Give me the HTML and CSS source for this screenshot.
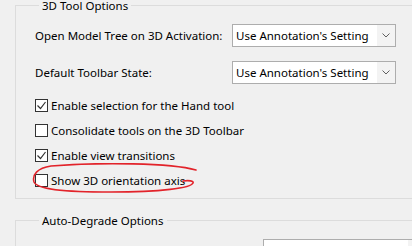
FILE: index.html
```html
<!DOCTYPE html>
<html lang="en">
<head>
    <meta charset="UTF-8">
    <meta name="viewport" content="width=device-width, initial-scale=1.0">
    <title>3D &amp; Multimedia Preferences</title>
    <link rel="stylesheet" href="styles.css">
</head>
<body>

    <!-- 3D Tool Options -->
    <fieldset class="group">
        <legend>3D Tool Options</legend>

        <div class="field">
            <label>Open Model Tree on 3D Activation:</label>
            <div class="combo">
                <span class="combo-value">Use Annotation's Setting</span>
                <span class="combo-arrow"><svg width="8" height="5" viewBox="0 0 8 5"><polyline points="0.5,0.5 4,4 7.5,0.5" /></svg></span>
            </div>
        </div>

        <div class="field">
            <label>Default Toolbar State:</label>
            <div class="combo">
                <span class="combo-value">Use Annotation's Setting</span>
                <span class="combo-arrow"><svg width="8" height="5" viewBox="0 0 8 5"><polyline points="0.5,0.5 4,4 7.5,0.5" /></svg></span>
            </div>
        </div>

        <div class="checks">
            <div class="check">
                <span class="box checked"><svg width="11" height="11" viewBox="0 0 11 11"><polyline points="1.5,5.5 4.5,8.5 9.5,2" /></svg></span>
                Enable selection for the Hand tool
            </div>
            <div class="check">
                <span class="box"></span>
                Consolidate tools on the 3D Toolbar
            </div>
            <div class="check">
                <span class="box checked"><svg width="11" height="11" viewBox="0 0 11 11"><polyline points="1.5,5.5 4.5,8.5 9.5,2" /></svg></span>
                Enable view transitions
            </div>
            <div class="check marked">
                <span class="box"></span>
                Show 3D orientation axis
                <!-- red hand-drawn circle -->
                <svg class="scribble" width="172" height="32" viewBox="0 0 172 32">
                    <path d="M166 7 C141 0, 71 -1, 21 3 C7 5, 2 12, 4 19 C7 26, 31 29, 81 29 C131 29, 161 25, 163 20 C164 18, 159 17, 153 18" />
                </svg>
            </div>
        </div>
    </fieldset>

    <!-- Auto-Degrade Options -->
    <fieldset class="group second">
        <legend>Auto-Degrade Options</legend>

        <div class="field">
            <label class="wide">Optimization Scheme for Low Frame Rate:</label>
            <div class="combo">
                <span class="combo-value">Bounding Box</span>
                <span class="combo-arrow"><svg width="8" height="5" viewBox="0 0 8 5"><polyline points="0.5,0.5 4,4 7.5,0.5" /></svg></span>
            </div>
        </div>
    </fieldset>

</body>
</html>
```

FILE: styles.css
```css
* {
    box-sizing: border-box;
}

body {
    margin: 0;
    background-color: #f0f0f0;
    font-family: "Noto Sans", "Liberation Sans", sans-serif;
    font-size: 11.5px;
    color: #000;
    overflow: hidden;
}

.group {
    margin: -1px -40px 0 15px;
    padding: 13px 0 5px 19px;
    border: 1px solid #dcdcdc;
    min-width: 0;
}

.group legend {
    margin-left: 4px;
    padding: 2px 3px 0;
    line-height: 10px;
}

.second {
    margin-top: 15px;
}

.field {
    display: flex;
    align-items: center;
    height: 23px;
    margin-bottom: 14px;
}

.field label {
    width: 197px;
    flex-shrink: 0;
    white-space: nowrap;
}

.field label.wide {
    width: 228px;
}

.combo {
    display: flex;
    width: 164px;
    height: 23px;
    border: 1px solid #adadad;
    background: #fff;
}

.combo-value {
    flex: 1;
    padding-left: 3px;
    line-height: 21px;
    white-space: nowrap;
    overflow: hidden;
}

.combo-arrow {
    width: 18px;
    display: flex;
    align-items: center;
    justify-content: center;
    background: #f3f3f3;
}

.combo-arrow polyline {
    fill: none;
    stroke: #606060;
    stroke-width: 1;
}

.checks {
    margin-top: -5px;
}

.check {
    display: flex;
    align-items: center;
    height: 25px;
}

.box {
    width: 13px;
    height: 13px;
    border: 1px solid #333;
    background: #fff;
    margin-right: 3px;
    display: flex;
    align-items: center;
    justify-content: center;
}

.box polyline {
    fill: none;
    stroke: #333;
    stroke-width: 1.2;
}

.marked {
    position: relative;
}

.scribble {
    position: absolute;
    left: -5px;
    top: -5px;
}

.scribble path {
    fill: none;
    stroke: #e2232a;
    stroke-width: 1.6;
    stroke-linecap: round;
}
```
